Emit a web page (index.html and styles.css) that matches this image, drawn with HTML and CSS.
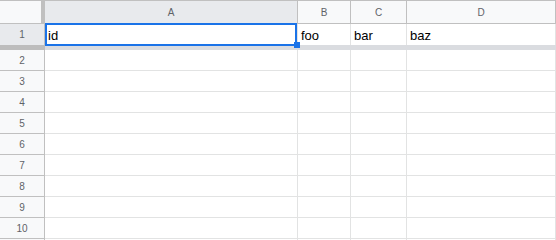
FILE: index.html
```html
<!DOCTYPE html>
<html>

<head>
  <link rel="stylesheet" href="styles.css">
</head>

<body>
  <div class="sheet">
    <div class="row head">
      <div class="corner"></div>
      <div class="colhead selected">A</div>
      <div class="colhead">B</div>
      <div class="colhead">C</div>
      <div class="colhead">D</div>
    </div>

    <div class="row first">
      <div class="rowhead selected">1</div>
      <div class="cell">id</div>
      <div class="cell">foo</div>
      <div class="cell">bar</div>
      <div class="cell">baz</div>
    </div>

    <div class="row freeze">
      <div class="freeze-head"></div>
      <div class="freeze-bar"></div>
    </div>

    <div class="row"><div class="rowhead">2</div><div class="cell"></div><div class="cell"></div><div class="cell"></div><div class="cell"></div></div>
    <div class="row"><div class="rowhead">3</div><div class="cell"></div><div class="cell"></div><div class="cell"></div><div class="cell"></div></div>
    <div class="row"><div class="rowhead">4</div><div class="cell"></div><div class="cell"></div><div class="cell"></div><div class="cell"></div></div>
    <div class="row"><div class="rowhead">5</div><div class="cell"></div><div class="cell"></div><div class="cell"></div><div class="cell"></div></div>
    <div class="row"><div class="rowhead">6</div><div class="cell"></div><div class="cell"></div><div class="cell"></div><div class="cell"></div></div>
    <div class="row"><div class="rowhead">7</div><div class="cell"></div><div class="cell"></div><div class="cell"></div><div class="cell"></div></div>
    <div class="row"><div class="rowhead">8</div><div class="cell"></div><div class="cell"></div><div class="cell"></div><div class="cell"></div></div>
    <div class="row"><div class="rowhead">9</div><div class="cell"></div><div class="cell"></div><div class="cell"></div><div class="cell"></div></div>
    <div class="row"><div class="rowhead">10</div><div class="cell"></div><div class="cell"></div><div class="cell"></div><div class="cell"></div></div>
    <div class="row"><div class="rowhead"></div><div class="cell"></div><div class="cell"></div><div class="cell"></div><div class="cell"></div></div>

    <!-- active cell A1 -->
    <div class="selection"><span class="handle"></span></div>
  </div>
</body>

</html>
```

FILE: styles.css
```css
* {
  box-sizing: border-box;
}

body {
  margin: 0;
  font-family: "Liberation Sans", Arial, sans-serif;
  background: #fff;
}

.sheet {
  position: relative;
  width: 556px;
  height: 240px;
  overflow: hidden;
}

.row {
  display: grid;
  grid-template-columns: 45px 253px 53px 56px 149px;
  height: 21px;
}

.head {
  height: 24px;
  border-top: 1px solid #c0c0c0;
}

.corner {
  background: #f8f9fa;
  border-right: 4px solid #c0c0c0;
  border-bottom: 1px solid #c0c0c0;
}

.colhead {
  display: flex;
  align-items: center;
  justify-content: center;
  background: #f8f9fa;
  border-right: 1px solid #c0c0c0;
  border-bottom: 1px solid #c0c0c0;
  font-size: 10px;
  color: #5f6368;
}

.colhead.selected,
.rowhead.selected {
  background: #e8eaed;
}

.rowhead {
  display: flex;
  align-items: center;
  justify-content: center;
  background: #f8f9fa;
  border-right: 1px solid #c0c0c0;
  border-bottom: 1px solid #c0c0c0;
  font-size: 10px;
  color: #5f6368;
}

.cell {
  display: flex;
  align-items: flex-end;
  padding: 0 3px 2px 3px;
  border-right: 1px solid #e2e3e3;
  border-bottom: 1px solid #e2e3e3;
  font-size: 13px;
  line-height: 15px;
  color: #000;
  white-space: nowrap;
}

.first .rowhead,
.first .cell {
  border-bottom: none;
}

.freeze {
  height: 5px;
}

.freeze-head {
  background: #bdbdbd;
}

.freeze-bar {
  grid-column: 2 / -1;
  background: #dadce0;
}

.selection {
  position: absolute;
  left: 45px;
  top: 23px;
  width: 252px;
  height: 23px;
  border: 2px solid #1a73e8;
}

.handle {
  position: absolute;
  left: 247px;
  top: 17px;
  width: 6px;
  height: 6px;
  background: #1a73e8;
}
```
